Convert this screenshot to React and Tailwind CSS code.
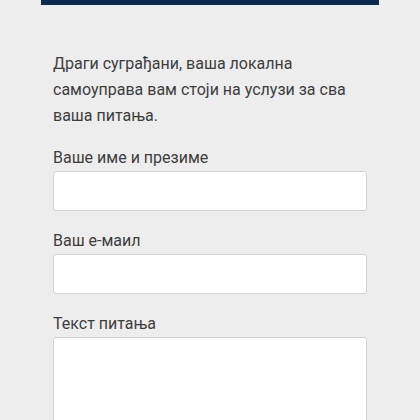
const Field = ({ label, multiline, first }) => (
  <label className={first ? 'block mt-[17px]' : 'block mt-[18px]'}>
    <span className="block text-[16px] leading-[24px] text-[#3d3d3d]">{label}</span>
    {multiline ? (
      <textarea className="mt-px block w-full h-[140px] bg-white border border-[#d3d3d3] rounded-[3px] resize-none focus:outline-none" />
    ) : (
      <input
        type="text"
        className="mt-px block w-full h-[40px] bg-white border border-[#d3d3d3] rounded-[3px] focus:outline-none"
      />
    )}
  </label>
);

const App = () => {
  return (
    <div className="h-screen bg-[#ededed] font-['Roboto',sans-serif] overflow-hidden">
      <div className="mx-[41px]">
        <div className="h-[5px] bg-[#0b2a51]" />
        <main className="px-3 pt-[46px]">
          <p className="text-[16px] leading-[26px] text-[#3d3d3d]">
            Драги суграђани, ваша локална самоуправа вам стоји на услузи за сва ваша питања.
          </p>
          <Field label="Ваше име и презиме" first />
          <Field label="Ваш е-маил" />
          <Field label="Текст питања" multiline />
        </main>
      </div>
    </div>
  );
};

export default App;
